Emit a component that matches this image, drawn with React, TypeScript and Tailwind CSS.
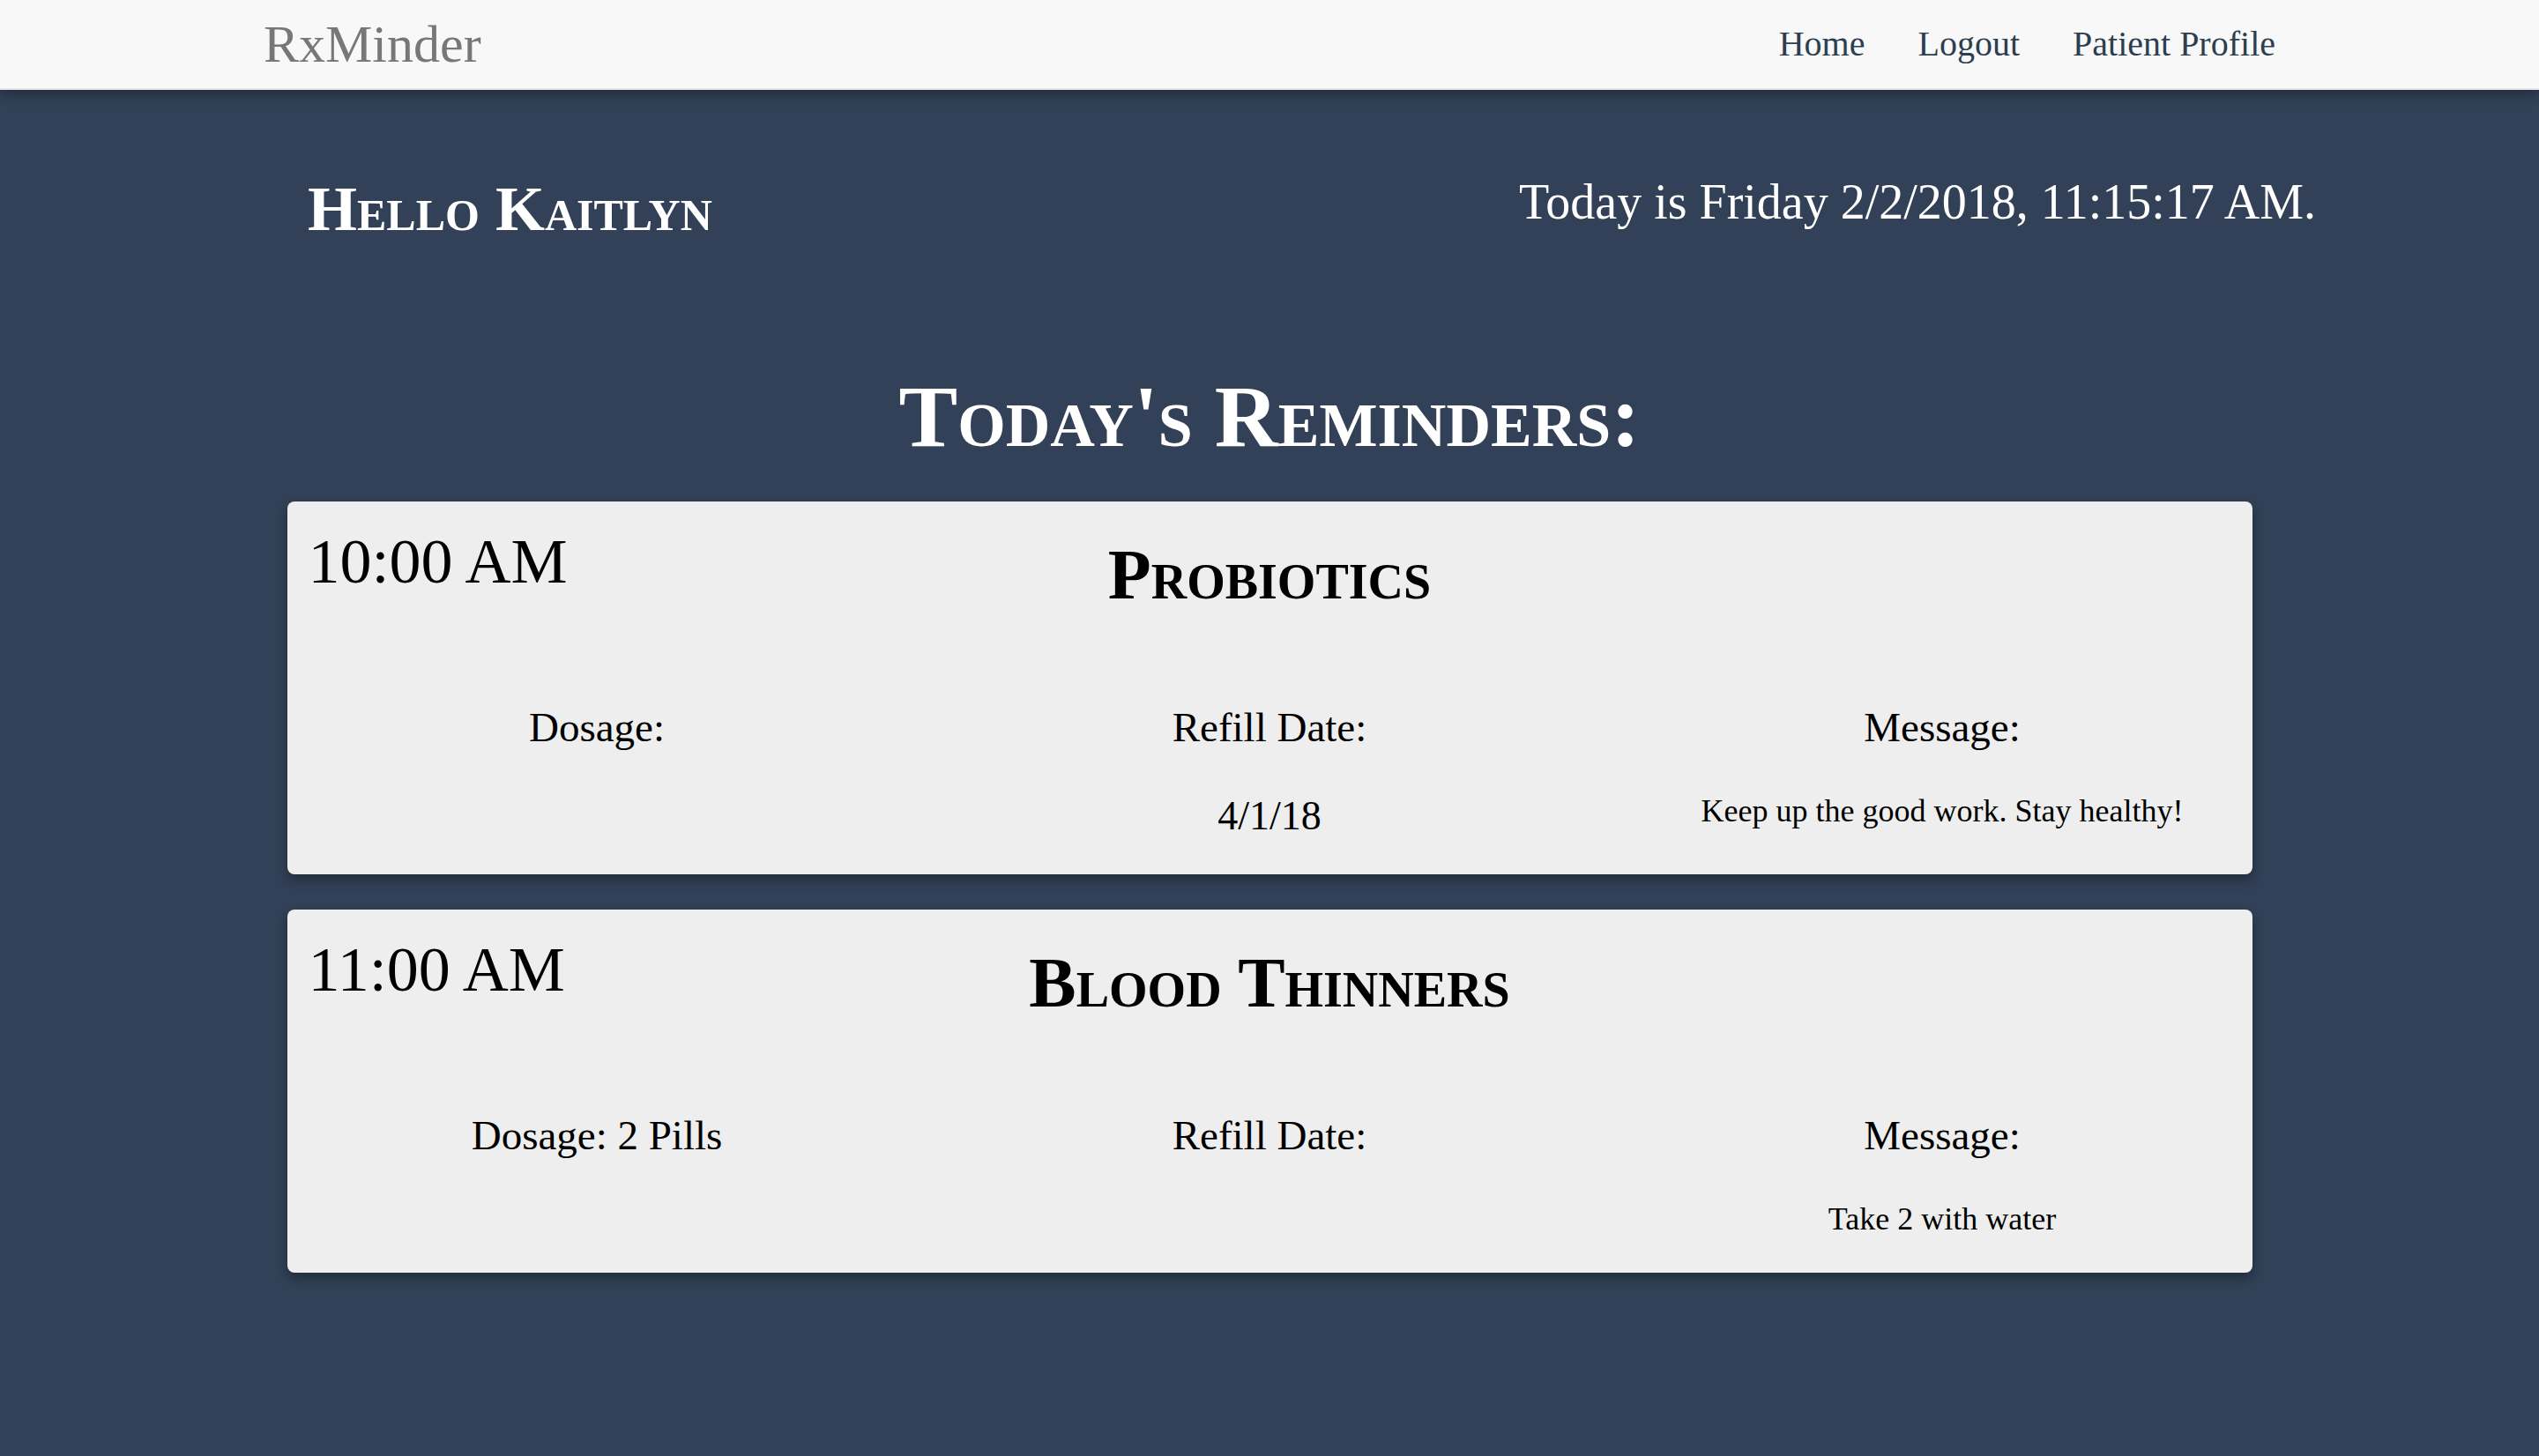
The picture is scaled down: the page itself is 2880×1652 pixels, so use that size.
import React from "react";

type Reminder = {
  time: string;
  name: string;
  dosage: string;
  refill: string;
  message: string;
};

const reminders: Reminder[] = [
  {
    time: "10:00 AM",
    name: "Probiotics",
    dosage: "",
    refill: "4/1/18",
    message: "Keep up the good work. Stay healthy!",
  },
  {
    time: "11:00 AM",
    name: "Blood Thinners",
    dosage: "2 Pills",
    refill: "",
    message: "Take 2 with water",
  },
];

function Navbar() {
  return (
    <nav className="relative z-10 h-[102px] bg-[#f8f8f8] border-b-2 border-[#e7e7e7] shadow-[0_4px_14px_rgba(0,0,0,0.35)]">
      <div className="w-[2282px] mx-auto h-full flex items-center justify-between">
        <a className="text-[60px] leading-none text-[#777777]">RxMinder</a>
        <ul className="flex items-center gap-[60px] text-[40px] leading-none text-[#2c3e50]">
          <li>Home</li>
          <li>Logout</li>
          <li>Patient Profile</li>
        </ul>
      </div>
    </nav>
  );
}

function ReminderCard({ r }: { r: Reminder }) {
  return (
    <div className="bg-[#eeeeee] rounded-[8px] pt-[32px] pb-[43px] shadow-[0_6px_14px_rgba(0,0,0,0.35)]">
      <div className="grid grid-cols-[1fr_auto_1fr] items-start">
        <div className="pl-[24px] text-[72px] leading-none">{r.time}</div>
        <h2 className="mt-[11px] text-[80px] font-bold leading-none [font-variant:small-caps]">
          {r.name}
        </h2>
        <div />
      </div>
      <div className="grid grid-cols-3 items-start -mx-[30px] mt-[110px] text-center">
        <div>
          <div className="text-[47px] leading-none">
            Dosage:{r.dosage ? ` ${r.dosage}` : ""}
          </div>
        </div>
        <div>
          <div className="text-[47px] leading-none">Refill Date:</div>
          {r.refill && (
            <div className="mt-[54px] text-[46px] leading-none">{r.refill}</div>
          )}
        </div>
        <div>
          <div className="text-[47px] leading-none">Message:</div>
          {r.message && (
            <div className="mt-[53px] text-[36px] leading-none">{r.message}</div>
          )}
        </div>
      </div>
    </div>
  );
}

export default function App() {
  return (
    <div className="min-h-screen bg-[#324157] font-['Liberation_Serif','Times_New_Roman',serif] text-black">
      <Navbar />
      <main>
        <div className="flex items-start justify-between pt-[99px] pl-[349px] pr-[253px] text-white">
          <h1 className="text-[72px] font-bold leading-none [font-variant:small-caps]">
            Hello Kaitlyn
          </h1>
          <p className="text-[56px] leading-none">
            Today is Friday 2/2/2018, 11:15:17 AM.
          </p>
        </div>
        <h1 className="mt-[150px] text-center text-white text-[100px] font-bold leading-none [font-variant:small-caps]">
          Today's Reminders:
        </h1>
        <div className="w-[2229px] mx-auto mt-[46px] flex flex-col gap-[40px]">
          {reminders.map((r) => (
            <ReminderCard key={r.name} r={r} />
          ))}
        </div>
      </main>
    </div>
  );
}
